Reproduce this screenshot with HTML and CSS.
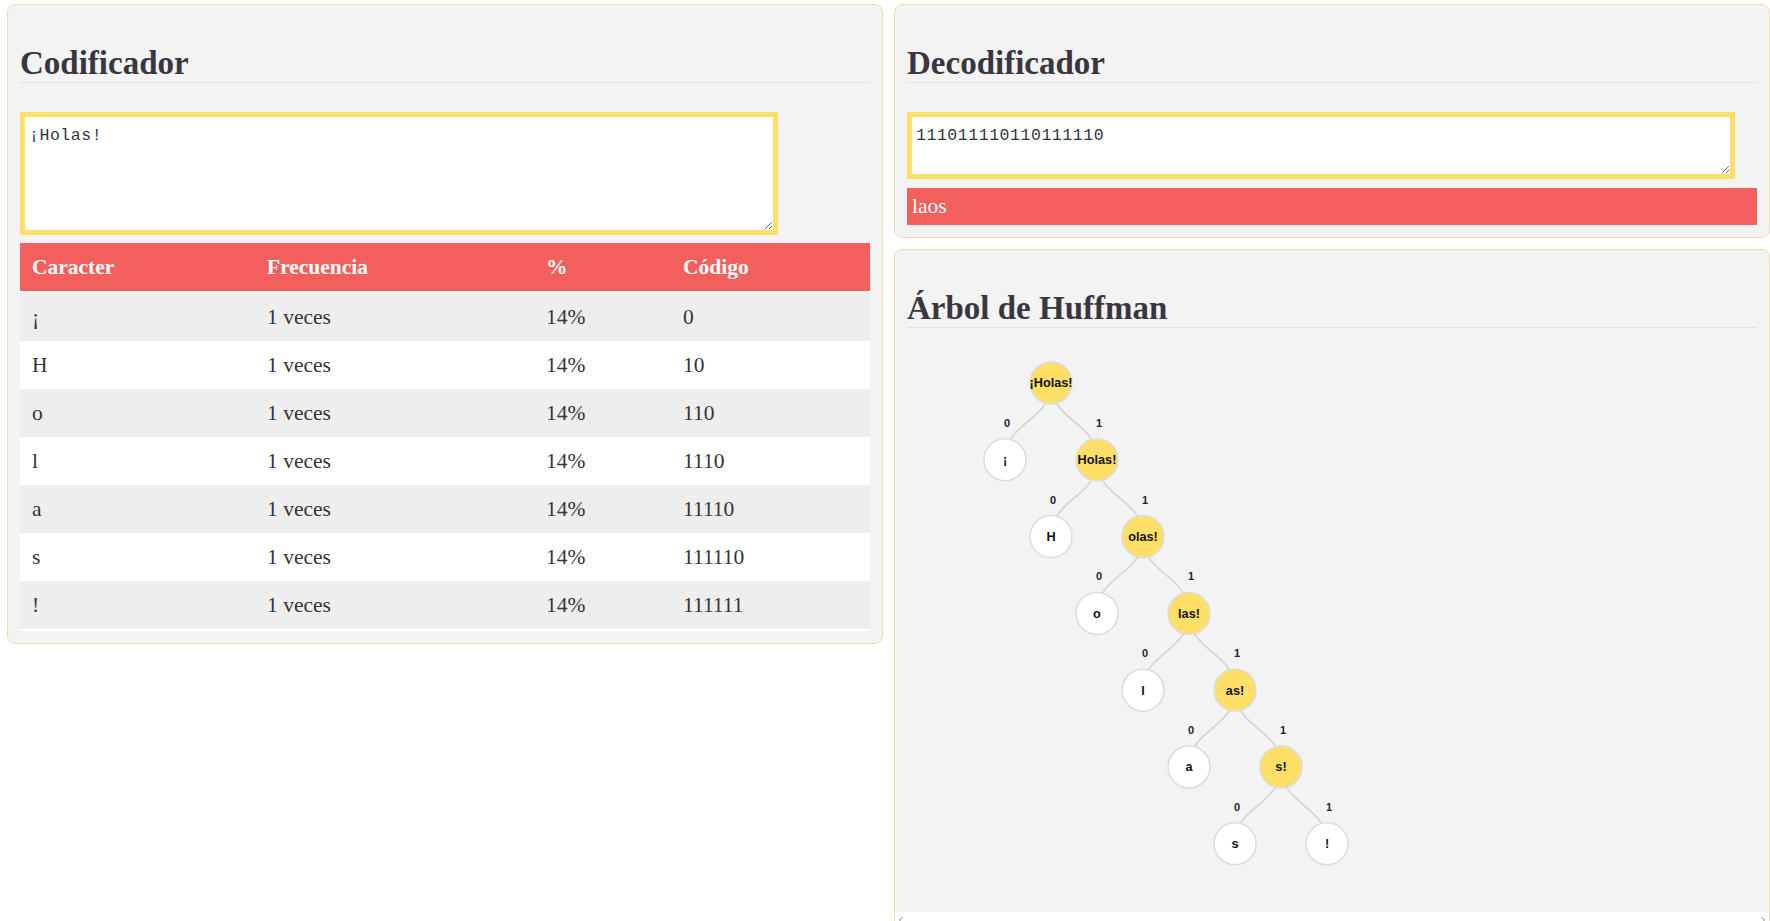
FILE: index.html
```html
<!DOCTYPE html>
<html lang="es">
<head>
<meta charset="utf-8">
<title>Huffman</title>
<link rel="stylesheet" href="styles.css">
</head>
<body>
<div class="page">
  <section class="panel encoder">
    <h2 class="title">Codificador</h2>
    <textarea class="input enc-input" spellcheck="false">¡Holas!</textarea>
    <table class="freq">
      <colgroup>
        <col class="c1"><col class="c2"><col class="c3"><col class="c4">
      </colgroup>
      <thead>
        <tr><th>Caracter</th><th>Frecuencia</th><th>%</th><th>Código</th></tr>
      </thead>
      <tbody>
        <tr><td>¡</td><td>1 veces</td><td>14%</td><td>0</td></tr>
        <tr><td>H</td><td>1 veces</td><td>14%</td><td>10</td></tr>
        <tr><td>o</td><td>1 veces</td><td>14%</td><td>110</td></tr>
        <tr><td>l</td><td>1 veces</td><td>14%</td><td>1110</td></tr>
        <tr><td>a</td><td>1 veces</td><td>14%</td><td>11110</td></tr>
        <tr><td>s</td><td>1 veces</td><td>14%</td><td>111110</td></tr>
        <tr><td>!</td><td>1 veces</td><td>14%</td><td>111111</td></tr>
      </tbody>
    </table>
  </section>

  <div class="column">
    <section class="panel decoder">
      <h2 class="title">Decodificador</h2>
      <textarea class="input dec-input" spellcheck="false">111011110110111110</textarea>
      <div class="output">laos</div>
    </section>

    <section class="panel tree">
      <div class="tree-body">
        <h2 class="title tree-title">Árbol de Huffman</h2>
        <svg class="tree-svg" width="850" height="584" viewBox="0 0 850 584">
          <g class="edges">
            <path class="edge" d="M144 55 C144 93.4 98 93.4 98 131.8"/>
            <path class="edge" d="M144 55 C144 93.4 190 93.4 190 131.8"/>
            <path class="edge" d="M190 131.8 C190 170.2 144 170.2 144 208.6"/>
            <path class="edge" d="M190 131.8 C190 170.2 236 170.2 236 208.6"/>
            <path class="edge" d="M236 208.6 C236 247 190 247 190 285.4"/>
            <path class="edge" d="M236 208.6 C236 247 282 247 282 285.4"/>
            <path class="edge" d="M282 285.4 C282 323.8 236 323.8 236 362.2"/>
            <path class="edge" d="M282 285.4 C282 323.8 328 323.8 328 362.2"/>
            <path class="edge" d="M328 362.2 C328 400.6 282 400.6 282 439"/>
            <path class="edge" d="M328 362.2 C328 400.6 374 400.6 374 439"/>
            <path class="edge" d="M374 439 C374 477.4 328 477.4 328 515.8"/>
            <path class="edge" d="M374 439 C374 477.4 420 477.4 420 515.8"/>
          </g>
          <g class="bits">
            <text x="100" y="94.9" dy=".35em">0</text>
            <text x="192" y="94.9" dy=".35em">1</text>
            <text x="146" y="171.7" dy=".35em">0</text>
            <text x="238" y="171.7" dy=".35em">1</text>
            <text x="192" y="248.5" dy=".35em">0</text>
            <text x="284" y="248.5" dy=".35em">1</text>
            <text x="238" y="325.3" dy=".35em">0</text>
            <text x="330" y="325.3" dy=".35em">1</text>
            <text x="284" y="402.1" dy=".35em">0</text>
            <text x="376" y="402.1" dy=".35em">1</text>
            <text x="330" y="478.9" dy=".35em">0</text>
            <text x="422" y="478.9" dy=".35em">1</text>
          </g>
          <g class="nodes">
            <circle class="inner" cx="144" cy="55" r="21"/>
            <text x="144" y="55" dy=".35em">¡Holas!</text>
            <circle class="leaf" cx="98" cy="131.8" r="21"/>
            <text x="98" y="131.8" dy=".35em">¡</text>
            <circle class="inner" cx="190" cy="131.8" r="21"/>
            <text x="190" y="131.8" dy=".35em">Holas!</text>
            <circle class="leaf" cx="144" cy="208.6" r="21"/>
            <text x="144" y="208.6" dy=".35em">H</text>
            <circle class="inner" cx="236" cy="208.6" r="21"/>
            <text x="236" y="208.6" dy=".35em">olas!</text>
            <circle class="leaf" cx="190" cy="285.4" r="21"/>
            <text x="190" y="285.4" dy=".35em">o</text>
            <circle class="inner" cx="282" cy="285.4" r="21"/>
            <text x="282" y="285.4" dy=".35em">las!</text>
            <circle class="leaf" cx="236" cy="362.2" r="21"/>
            <text x="236" y="362.2" dy=".35em">l</text>
            <circle class="inner" cx="328" cy="362.2" r="21"/>
            <text x="328" y="362.2" dy=".35em">as!</text>
            <circle class="leaf" cx="282" cy="439" r="21"/>
            <text x="282" y="439" dy=".35em">a</text>
            <circle class="inner" cx="374" cy="439" r="21"/>
            <text x="374" y="439" dy=".35em">s!</text>
            <circle class="leaf" cx="328" cy="515.8" r="21"/>
            <text x="328" y="515.8" dy=".35em">s</text>
            <circle class="leaf" cx="420" cy="515.8" r="21"/>
            <text x="420" y="515.8" dy=".35em">!</text>
          </g>
        </svg>
      </div>
      <div class="hscroll">
        <svg class="arrow" width="6" height="8" viewBox="0 0 6 8"><path d="M4.5 1 L1.5 4 L4.5 7"/></svg>
        <svg class="arrow" width="6" height="8" viewBox="0 0 6 8"><path d="M1.5 1 L4.5 4 L1.5 7"/></svg>
      </div>
    </section>
  </div>
</div>
</body>
</html>
```

FILE: styles.css
```css
html, body {
  margin: 0;
  padding: 0;
  background: #ffffff;
  overflow: hidden;
}

.page {
  display: flex;
  align-items: flex-start;
  gap: 11px;
  padding: 4px 0 0 7px;
  font-family: "Liberation Serif", "Times New Roman", serif;
  color: #333333;
}

.column {
  display: flex;
  flex-direction: column;
  gap: 11px;
  width: 876px;
}

.panel {
  box-sizing: border-box;
  width: 876px;
  background: #f3f3f3;
  border: 1px solid #f2dcae;
  border-radius: 8px;
  padding: 12px;
}

.title {
  margin: 27px 0 29px;
  padding: 0;
  font-family: "Liberation Serif", "Times New Roman", serif;
  font-weight: 700;
  font-size: 33px;
  line-height: 38px;
  color: #3a3640;
  border-bottom: 1px solid #e2e2e2;
}

.input {
  display: block;
  box-sizing: border-box;
  margin: 0;
  background: #ffffff;
  border: 5px solid #ffdf66;
  border-radius: 0;
  padding: 9px 4px 7px;
  font-family: "Liberation Mono", "DejaVu Sans Mono", monospace;
  font-size: 16.5px;
  letter-spacing: 0.55px;
  line-height: 20px;
  color: #2e3542;
  outline: none;
}

.enc-input {
  width: 758px;
  height: 123px;
  margin-bottom: 8px;
}

.dec-input {
  width: 828px;
  height: 67px;
  margin-bottom: 9px;
}

.freq {
  width: 850px;
  table-layout: fixed;
  border-collapse: separate;
  border-spacing: 0;
  border-bottom: 2px solid #ffffff;
  font-size: 21.5px;
  color: #35333b;
}

.freq .c1 { width: 235px; }
.freq .c2 { width: 279px; }
.freq .c3 { width: 137px; }
.freq .c4 { width: 199px; }

.freq th {
  background: #f25f5c;
  color: #ffffff;
  font-weight: 700;
  text-align: left;
  padding: 0 12px;
  line-height: 48px;
  height: 48px;
  border-bottom: 2px solid #ffffff;
}

.freq td {
  padding: 0 12px;
  line-height: 48px;
  height: 48px;
  text-align: left;
}

.freq tbody tr:nth-child(odd) {
  background: #eeeeee;
}

.freq tbody tr:nth-child(even) {
  background: #ffffff;
}

.output {
  background: #f25f5c;
  color: #ffffff;
  height: 37px;
  line-height: 37px;
  padding: 0 5px;
  font-size: 21.5px;
}

.tree {
  padding: 0;
  overflow: hidden;
}

.tree-body {
  padding: 12px 12px 0;
}

.tree-title {
  margin-bottom: 0;
}

.tree-svg {
  display: block;
}

.edge {
  fill: none;
  stroke: #d2d2d2;
  stroke-width: 1.5;
}

.bits text {
  font-family: "Liberation Sans", Arial, sans-serif;
  font-size: 11px;
  font-weight: 700;
  fill: #1f2233;
  text-anchor: middle;
}

.nodes circle {
  stroke: #dcdcdc;
  stroke-width: 1.5;
}

.nodes .inner {
  fill: #ffdf66;
}

.nodes .leaf {
  fill: #ffffff;
}

.nodes text {
  font-family: "Liberation Sans", Arial, sans-serif;
  font-size: 12.7px;
  font-weight: 700;
  fill: #111111;
  text-anchor: middle;
}

.hscroll {
  display: flex;
  justify-content: space-between;
  align-items: center;
  height: 15px;
  padding: 0 3px;
  background: #ffffff;
}

.arrow path {
  fill: none;
  stroke: #b5b5b5;
  stroke-width: 1.2;
}
```
